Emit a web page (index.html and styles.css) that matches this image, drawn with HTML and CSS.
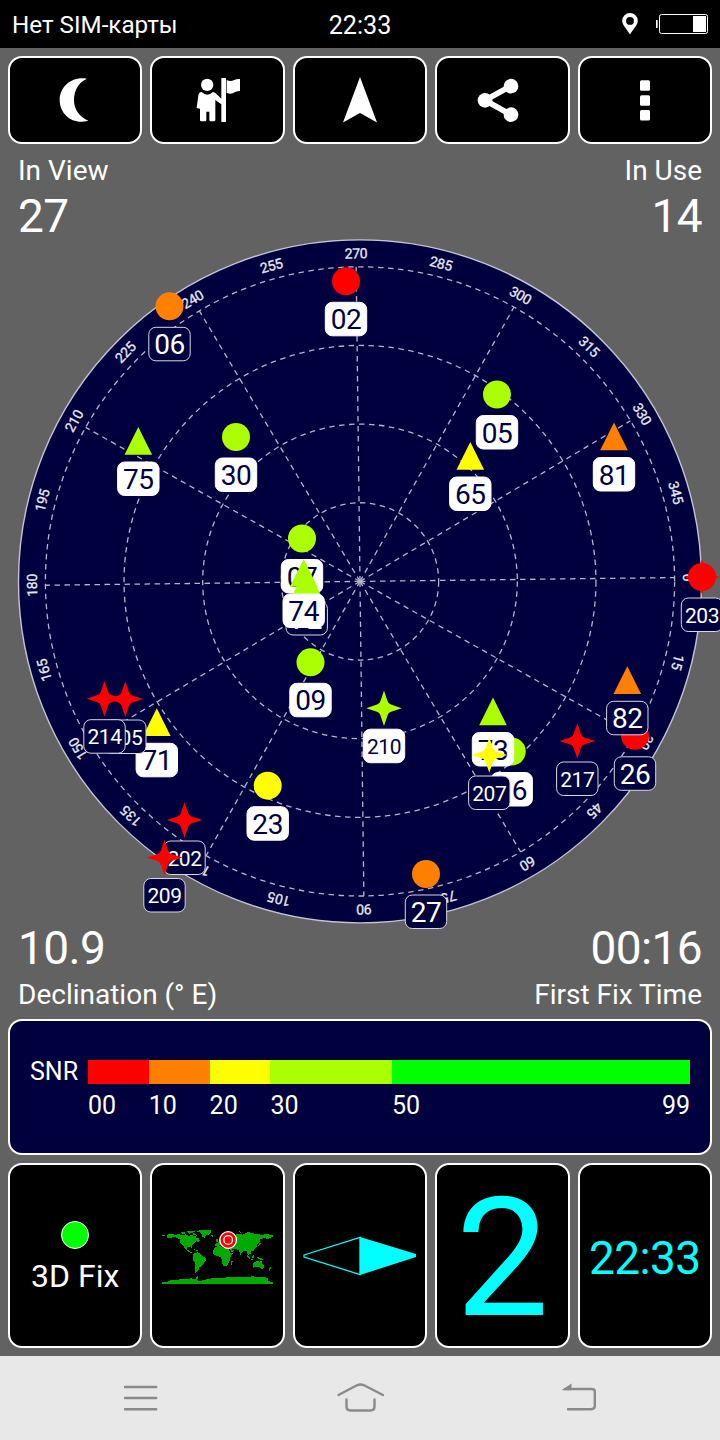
FILE: index.html
```html
<!DOCTYPE html>
<html lang="ru">
  <head>
    <meta charset="UTF-8" />
    <meta name="viewport" content="width=device-width, initial-scale=1.0" />
    <title>GPS Satellites</title>
    <link rel="stylesheet" href="styles.css">
  </head>
  <body>
    <header class="status-bar">
      <span class="carrier">Нет SIM-карты</span>
      <span class="clock">22:33</span>
      <div class="status-icons">
        <svg class="pin" viewBox="0 0 16 22">
          <path fill-rule="evenodd" d="M8 0a7.8 7.8 0 0 0-7.8 7.8C.2 12 4 15 8 21.5 12 15 15.8 12 15.8 7.800A7.800 7.800 0 0 0 8 0zm0 4a3.900 3.900 0 1 1 0 7.800 3.900 3.900 0 0 1 0-7.800z" />
        </svg>
        <svg class="battery" viewBox="0 0 52 20">
          <rect class="case" x="3.500" y=".5" width="48" height="19" rx="2" />
          <rect x="37" y="2" width="13" height="16" />
          <rect x="0" y="6" width="1.600" height="8" />
        </svg>
      </div>
    </header>

    <nav class="toolbar">
      <button class="tool">
        <svg class="icon" viewBox="160 234 132 132">
          <path d="M262 236C215 228 180 261 180 300C180 345 222 376 266 362C238 350 223 328 223 300C223 270 238 246 262 236Z" />
        </svg>
      </button>
      <button class="tool">
        <svg class="icon" viewBox="587 234 132 132">
          <circle cx="620.500" cy="254.500" r="18.500" />
          <path d="M663 234H677V366H663V313L645 300V360Q645 364 641 364H631Q627 364 627 360V335H618V360Q618 364 614 364H603Q599 364 599 360V326L589 324L594 286Q595 277 604 276Q620 292 638 276Q643 277 646 280L663 296Z" />
          <path d="M679 240Q690 246 700 241Q710 236 719 237V273Q710 272 700 278Q690 284 679 278Z" />
        </svg>
      </button>
      <button class="tool">
        <svg class="icon arrow" viewBox="0 0 34 46">
          <path d="M17 0L34 45.500L17 36L0 45.500Z" />
        </svg>
      </button>
      <button class="tool">
        <svg class="icon" viewBox="361 234 132 132">
          <path class="link" d="M454 258L376 301L454 344" />
          <circle cx="376" cy="301" r="22" />
          <circle cx="454" cy="258.500" r="22" />
          <circle cx="454" cy="344" r="22" />
        </svg>
      </button>
      <button class="tool">
        <svg class="icon" viewBox="0 0 44 44">
          <rect x="17" y="2.200" width="10" height="10.500" rx="1.500" />
          <rect x="17" y="17.200" width="10" height="10.500" rx="1.500" />
          <rect x="17" y="32" width="10" height="10.500" rx="1.500" />
        </svg>
      </button>
    </nav>

    <main class="content">
      <section class="stats">
        <div class="stat">
          <span class="stat-label">In View</span>
          <span class="stat-value">27</span>
        </div>
        <div class="stat right">
          <span class="stat-label">In Use</span>
          <span class="stat-value">14</span>
        </div>
      </section>

      <!-- Sky plot, filled in by sky.js -->
      <svg class="sky" viewBox="0 239 720 686">
        <circle class="disc" cx="360" cy="581.400" r="341.500" />
        <g id="grid"></g>
        <g id="satellites"></g>
      </svg>

      <section class="stats bottom">
        <div class="stat">
          <span class="stat-value">10.9</span>
          <span class="stat-label">Declination (° E)</span>
        </div>
        <div class="stat right">
          <span class="stat-value">00:16</span>
          <span class="stat-label">First Fix Time</span>
        </div>
      </section>

      <section class="snr">
        <span class="snr-title">SNR</span>
        <div class="snr-scale">
          <div class="snr-step red"><i></i><span>00</span></div>
          <div class="snr-step orange"><i></i><span>10</span></div>
          <div class="snr-step yellow"><i></i><span>20</span></div>
          <div class="snr-step lime"><i></i><span>30</span></div>
          <div class="snr-step green"><i></i><span>50</span><span class="last">99</span></div>
        </div>
      </section>

      <section class="cards">
        <div class="card fix">
          <span class="dot"></span>
          <span class="fix-text">3D Fix</span>
        </div>
        <div class="card">
          <svg class="map" viewBox="37 208 332 162">
            <!-- North America, Greenland -->
            <path d="M37 223H45V226H37ZM50 224L60 219L74 222L90 221L98 224L108 221L118 226L124 222L132 226L140 224L138 231L146 232L150 240L144 244L138 240L136 246L130 250L126 256L127 263L122 259L112 260L113 268L119 270L122 274L130 277L127 279L114 273L106 265L98 252L90 244L91 238L84 232L72 229L60 233L52 231Z" />
            <path d="M92 216L104 214L110 218L98 220ZM110 213L124 210L140 210L128 217L118 219ZM126 219L136 218L141 225L132 223Z" />
            <path d="M138 212L150 209H184V213L180 220L170 224L164 231L158 228L156 220L150 215ZM182 225L188 224V228L182 227ZM126 264L138 267L146 271L138 270Z" />
            <!-- South America -->
            <path d="M132 278L142 275L152 279L156 286L169 292L168 299L162 308L154 317L148 321L146 328L141 332L138 339L134 336L135 324L137 308L130 299L129 288Z" />
            <!-- Africa -->
            <path d="M194 262L206 256L214 258L222 262L234 262L242 276L249 277L241 290L239 302L233 313L226 318L219 315L216 301L214 289L202 286L191 281L189 271ZM246 299L249 302L245 312L242 309Z" />
            <!-- Eurasia -->
            <path d="M196 250L205 245L211 236L216 226L230 218L244 220L256 222L266 219L280 222L294 214L306 217L320 221L340 222L352 220L369 224V229L360 231L354 236L349 234L342 232L332 236L331 244L322 250L320 258L314 264L311 270L304 272L304 279L298 281L300 288L293 280L290 272L282 270L275 278L272 282L266 269L254 264L246 267L252 270L246 276L240 266L234 258L224 259L220 254L212 252L203 256L195 257ZM198 236L203 234L205 244L198 245ZM262 214L270 212L274 216ZM330 246L334 248L326 257L324 255Z" />
            <!-- Oceania -->
            <path d="M292 283L302 292L300 295L290 286ZM305 287L313 283L314 291L306 292ZM302 296L314 297L312 299L302 298ZM322 290L332 291L342 298L336 300L326 295ZM310 308L318 302L326 302L330 305L334 300L338 309L344 315L343 322L335 325L330 319L320 318L310 321L308 314ZM334 327L338 327L336 331ZM362 319L366 322L358 331L356 328Z" />
            <!-- Antarctica -->
            <path d="M37 365H47L58 361L66 357L82 358L96 355L110 356L124 353L136 355L142 347L148 344L144 350L146 355L138 358L152 361L170 356L186 353L202 352L218 353L232 350L250 350L266 348L286 350L306 347L326 349L346 350L356 352L352 359L358 362L369 364V370H37Z" />
            <g class="target">
              <circle cx="235" cy="238" r="25" />
              <circle cx="235" cy="238" r="13" />
            </g>
          </svg>
        </div>
        <div class="card">
          <svg class="needle" viewBox="0 0 114 40">
            <path class="outline" d="M1 19L57 1.500V38.500L1 21Z" />
            <path d="M57 1L113 18V21L57 39Z" />
          </svg>
        </div>
        <div class="card"><span class="count">2</span></div>
        <div class="card"><span class="time">22:33</span></div>
      </section>
    </main>

    <footer class="nav-bar">
      <svg viewBox="0 0 50 32">
        <path d="M10 5H41.200M10 16H41.200M10 27.200H41.200" />
      </svg>
      <svg viewBox="0 0 50 32">
        <path d="M3.500 13L21.500 3.500Q25.500 1.500 29.500 3.500L48 13M11.500 17.500V24.500Q11.500 28.500 15.500 28.500H35.500Q39.500 28.500 39.500 24.500V17.500" />
      </svg>
      <svg viewBox="0 0 50 32">
        <path d="M13 27.200H36Q39.800 27.200 39.800 24V9.500Q39.800 7 36.500 7H10" />
        <path class="tip" d="M6.500 8.200L16.500 1.500V8.200Z" />
      </svg>
    </footer>

    <script src="sky.js"></script>
  </body>
</html>
```

FILE: styles.css
```css
* {
  box-sizing: border-box;
}

body {
  margin: 0;
  width: 720px;
  height: 1440px;
  display: flex;
  flex-direction: column;
  overflow: hidden;
  background: #626262;
  color: white;
  font-family: Roboto, "Liberation Sans", sans-serif;
}

svg {
  display: block;
  fill: white;
}

.status-bar {
  display: grid;
  grid-template-columns: 1fr auto 1fr;
  align-items: center;
  height: 48px;
  padding: 0 12px;
  background: black;
}

.carrier {
  padding-top: 2px;
  font-size: 24.2px;
}

.clock {
  padding-top: 2px;
  font-size: 25.2px;
}

.status-icons {
  display: flex;
  justify-content: flex-end;
  align-items: center;
  gap: 18px;
}

.pin {
  width: 16px;
  height: 22px;
}

.battery {
  width: 52px;
  height: 20px;
}

.battery .case {
  fill: none;
  stroke: white;
}

.toolbar,
.cards {
  display: grid;
  grid-template-columns: repeat(5, 1fr);
  gap: 8px;
  padding: 8px 8px 0;
}

.tool,
.card {
  display: flex;
  justify-content: center;
  align-items: center;
  padding: 0;
  background: black;
  border: 2px solid white;
  border-radius: 14px;
}

.tool {
  height: 88px;
}

.icon {
  width: 44px;
  height: 44px;
  overflow: visible;
}

.icon.arrow {
  width: 34px;
  height: 46px;
}

.link {
  fill: none;
  stroke: white;
  stroke-width: 17;
}

.content {
  flex: 1;
  display: flex;
  flex-direction: column;
}

.stats {
  display: flex;
  justify-content: space-between;
  padding: 10px 18px 0;
}

.stats.bottom {
  padding-top: 0;
}

.stat {
  display: flex;
  flex-direction: column;
  gap: 6px;
}

.bottom .stat {
  gap: 7px;
}

.stat.right {
  text-align: right;
}

.stat-label {
  font-size: 28px;
  line-height: 33px;
}

.stat-value {
  font-size: 46px;
  line-height: 46px;
  letter-spacing: -0.6px;
}

/* Sky plot */
.sky {
  width: 720px;
  height: 686px;
  overflow: visible;
}

.disc {
  fill: #00003f;
  stroke: #c4c4d6;
  stroke-width: 1.4;
}

.grid-line {
  fill: none;
  stroke: #b4b4cc;
  stroke-width: 1.3;
  stroke-dasharray: 5.5 4.5;
}

.degree {
  fill: #e8e8f0;
  stroke: #e8e8f0;
  stroke-width: 0.3;
  font-size: 14px;
  letter-spacing: -0.3px;
  text-anchor: middle;
}

.sat .tag {
  fill: white;
  stroke: white;
}

.sat .id {
  fill: #00003f;
  font-size: 28px;
  letter-spacing: -0.4px;
  text-anchor: middle;
}

.sat .id.long {
  font-size: 21px;
}

.sat.idle .tag {
  fill: #00003f;
  stroke: #d8d8e4;
}

.sat.idle .id {
  fill: white;
}

/* SNR legend */
.snr {
  display: flex;
  margin: 8px 8px 0;
  padding: 39px 20px 0;
  height: 136px;
  background: #00003f;
  border: 2px solid white;
  border-radius: 14px;
}

.snr-title {
  width: 58px;
  font-size: 25px;
  line-height: 24px;
}

.snr-scale {
  flex: 1;
  display: grid;
  grid-template-columns: 10fr 10fr 10fr 20fr 49fr;
}

.snr-step {
  display: flex;
  flex-wrap: wrap;
  align-content: flex-start;
  justify-content: space-between;
  font-size: 25px;
  line-height: 29px;
}

.snr-step i {
  width: 100%;
  height: 24px;
  margin-bottom: 7px;
}

.red i { background: #ff0000; }
.orange i { background: #ff8000; }
.yellow i { background: #ffff00; }
.lime i { background: #aaff00; }
.green i { background: #00ff00; }

.card {
  height: 185px;
  padding-top: 2px;
}

.card.fix {
  flex-direction: column;
  gap: 8px;
  padding-top: 4px;
}

.dot {
  width: 28px;
  height: 28px;
  border-radius: 50%;
  border: 1.5px solid white;
  background: #00ff00;
}

.fix-text {
  font-size: 32px;
  line-height: 38px;
}

.map {
  width: 111px;
  height: 54px;
  fill: #00aa00;
  overflow: visible;
}

.map path {
  shape-rendering: crispEdges;
}

.target circle {
  fill: red;
  stroke: white;
  stroke-width: 4;
}

.needle {
  width: 114px;
  height: 40px;
  margin-top: -2px;
  fill: cyan;
}

.needle .outline {
  fill: none;
  stroke: cyan;
  stroke-width: 1.3;
}

.count {
  padding-top: 4px;
  color: cyan;
  font-size: 166px;
  line-height: 181px;
}

.time {
  padding-top: 2px;
  color: cyan;
  font-size: 46px;
  letter-spacing: -0.6px;
}

.nav-bar {
  display: flex;
  justify-content: space-between;
  height: 84px;
  padding: 26px 115px 0;
  background: #e8e8e8;
}

.nav-bar svg {
  width: 50px;
  height: 32px;
  fill: none;
  stroke: #8a8a8a;
  stroke-width: 2.4;
  stroke-linecap: round;
}

.nav-bar .tip {
  fill: #8a8a8a;
  stroke: none;
}
```

FILE: sky.js
```js
const CX = 360;
const CY = 581.4;
const RING = 78.65;
const HEADING = -0.7;

const COLORS = {
  red: "#ff0000",
  orange: "#ff8000",
  yellow: "#ffff00",
  lime: "#aaff00",
};

const SHAPES = {
  circle: '<circle r="14" />',
  triangle: '<path d="M0 -14L13.8 13.8H-13.8Z" />',
  star: '<path d="M0 -17.8L3.6 -7Q4.4 -4.4 7 -3.6L17.8 0L7 3.6Q4.4 4.4 3.6 7L0 17.8L-3.6 7Q-4.4 4.4 -7 3.6L-17.8 0L-7 -3.6Q-4.4 -4.4 -3.6 -7Z" />',
};

// id, shape, color, x, y, used in fix
const satellites = [
  ["06", "circle", "orange", 169.5, 306.3, false],
  ["02", "circle", "red", 346, 281.3, true],
  ["05", "circle", "lime", 497, 394.5, true],
  ["30", "circle", "lime", 236, 437, true],
  ["75", "triangle", "lime", 138.3, 441, true],
  ["81", "triangle", "orange", 614, 436.5, true],
  ["65", "triangle", "yellow", 470.3, 456, true],
  ["07", "circle", "lime", 302, 538.5, true],
  ["72", "triangle", "lime", 306.7, 580.5, false],
  ["74", "triangle", "lime", 303.7, 573, true],
  ["09", "circle", "lime", 310.5, 662.3, true],
  ["203", "star", "red", 702, 577, false],
  ["26", "circle", "red", 635, 735.8, false],
  ["82", "triangle", "orange", 627.3, 680.3, false],
  ["16", "circle", "lime", 511.7, 751.5, true],
  ["73", "triangle", "lime", 493, 711.5, true],
  ["207", "star", "yellow", 489.3, 755, false],
  ["210", "star", "lime", 384, 708.2, true],
  ["217", "star", "red", 577.3, 741, false],
  ["71", "triangle", "yellow", 156.8, 722.3, true],
  ["205", "star", "red", 125.3, 699, false],
  ["214", "star", "red", 104.5, 698.7, false],
  ["23", "circle", "yellow", 267.7, 785.7, true],
  ["202", "star", "red", 184.5, 820, false],
  ["209", "star", "red", 164.5, 857.5, false],
  ["27", "circle", "orange", 426, 874, false],
];

let grid = "";

for (let i = 1; i <= 4; i++) {
  grid += `<circle class="grid-line" cx="${CX}" cy="${CY}" r="${RING * i}" />`;
}

for (let deg = 0; deg < 360; deg += 15) {
  const turn = deg + HEADING;
  if (deg % 30 === 0) {
    grid += `<path class="grid-line" transform="rotate(${turn} ${CX} ${CY})" d="M${CX} ${CY}h${RING * 4}" />`;
  }
  grid += `<text class="degree" transform="rotate(${turn + 90} ${CX} ${CY})" x="${CX}" y="${CY - 323}">${deg}</text>`;
}

document.getElementById("grid").innerHTML = grid;

document.getElementById("satellites").innerHTML = satellites
  .map(([id, shape, color, x, y, used]) => {
    const long = id.length > 2;
    // 203 sits right on top of another red satellite
    const extra = id === "203" ? SHAPES.circle : "";
    return `<g class="sat ${used ? "" : "idle"}" transform="translate(${x} ${y})">
      <g fill="${COLORS[color]}">${SHAPES[shape]}${extra}</g>
      <rect class="tag" x="-20.7" y="21" width="41.4" height="33.5" rx="7" />
      <text class="id ${long ? "long" : ""}" y="${long ? 45.5 : 48}">${id}</text>
    </g>`;
  })
  .join("");
```
